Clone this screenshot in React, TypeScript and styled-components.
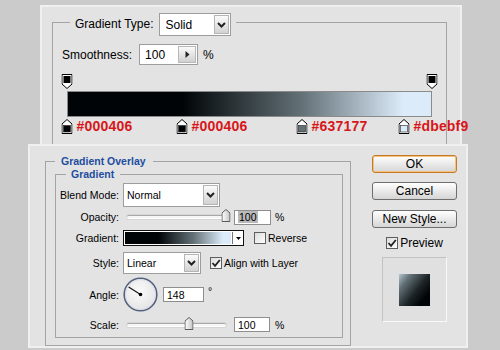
import React from 'react'
import styled, { createGlobalStyle, css } from 'styled-components'

const GlobalStyle = createGlobalStyle`
  html, body {
    margin: 0;
    padding: 0;
    background: #cbcbcb;
  }
  body {
    font-family: "Liberation Sans", Arial, sans-serif;
    color: #000;
    overflow: hidden;
  }
`

const Page = styled.div`
  width: 500px;
  height: 350px;
  padding-top: 5px;
  box-sizing: border-box;
`

// ---- gradient editor (back window) ----
const EditorPanel = styled.div`
  width: 422px;
  height: 139px;
  margin-left: 40px;
  box-sizing: border-box;
  background: #e3e3e3;
  border: 2px solid #f0f0f0;
  border-bottom: none;
  padding: 6px 0 0 10px;
`

const GroupBox = styled.fieldset`
  margin: 0;
  min-inline-size: 0;
  box-sizing: border-box;
  border: 1px solid #a4a4a4;
`

const TypeBox = styled(GroupBox)`
  width: 395px;
  height: 131px;
  border-bottom: none;
  padding: 0 0 0 9px;
`

const TypeLegend = styled.legend`
  margin-left: 8px;
  padding: 0 5px;
  height: 18px;
`

const LegendRow = styled.div`
  display: flex;
  align-items: flex-start;
  gap: 5px;
  height: 18px;
  font-size: 12px;
`

const TypeLabel = styled.span`
  line-height: 23px;
`

const SelectBox = styled.div<{ $w: number; $h: number; $size: number; $pad: number }>`
  display: flex;
  flex-shrink: 0;
  width: ${(p) => p.$w}px;
  height: ${(p) => p.$h}px;
  box-sizing: border-box;
  background: #fff;
  border: 1px solid #9d9d9d;
  font-size: ${(p) => p.$size}px;
  span:first-child {
    flex: 1;
    display: flex;
    align-items: center;
    padding-left: ${(p) => p.$pad}px;
  }
`

const SelectButton = styled.span`
  width: 15px;
  margin: 1px;
  box-sizing: border-box;
  background: linear-gradient(#fbfbfb, #d2d2d2);
  border: 1px solid #b5b5b5;
  display: flex;
  align-items: center;
  justify-content: center;
`

const SmoothRow = styled.div`
  display: flex;
  align-items: center;
  height: 21px;
  margin-top: 13px;
  font-size: 12px;
`

const SmoothLabel = styled.span`
  margin-right: 7px;
`

const SpinInput = styled.div`
  display: flex;
  width: 59px;
  height: 21px;
  box-sizing: border-box;
  background: #fff;
  border: 1px solid #9d9d9d;
  span:first-child {
    flex: 1;
    display: flex;
    align-items: center;
    padding-left: 5px;
  }
`

const SpinButton = styled.span`
  width: 18px;
  margin: 1px;
  box-sizing: border-box;
  background: linear-gradient(#fafafa, #d0d0d0);
  border: 1px solid #b8b8b8;
  display: flex;
  align-items: center;
  justify-content: center;
`

const Unit = styled.span<{ $gap: number }>`
  margin-left: ${(p) => p.$gap}px;
`

const StopTrack = styled.div<{ $top: number }>`
  position: relative;
  width: 365px;
  height: 15px;
  margin: ${(p) => p.$top}px 0 0 5px;
`

const Stop = styled.div`
  position: absolute;
  top: 0;
  display: flex;
  align-items: center;
  gap: 4px;
  transform: translateX(-5.5px);
`

const StopLabel = styled.span`
  font-size: 14px;
  font-weight: bold;
  line-height: 15px;
  letter-spacing: 0.2px;
  color: #d8161a;
  white-space: nowrap;
`

const GradientBar = styled.div<{ $stops: string }>`
  width: 365px;
  height: 26px;
  margin: 2px 0 0 5px;
  box-sizing: border-box;
  border: 1px solid #8a8a8a;
  background: linear-gradient(to right, ${(p) => p.$stops});
`

// ---- layer style dialog (front window) ----
const StyleDialog = styled.div`
  display: flex;
  align-items: flex-start;
  width: 440px;
  margin-left: 28px;
  box-sizing: border-box;
  background: #e3e3e3;
  border: 2px solid #f0f0f0;
  padding: 9px 0 0 15px;
  font-size: 10.5px;
`

const OverlayBox = styled(GroupBox)`
  width: 306px;
  padding: 0 0 7px 9px;
`

const BoxTitle = styled.legend<{ $ml: number; $pl: number; $pr: number }>`
  margin-left: ${(p) => p.$ml}px;
  padding: 0 ${(p) => p.$pr}px 0 ${(p) => p.$pl}px;
  font-weight: bold;
  font-size: 10.5px;
  line-height: 13px;
  color: #1d4d9f;
`

const GradientBox = styled(GroupBox)`
  width: 288px;
  padding: 2px 0 0 0;
`

const Row = styled.div<{ $h: number }>`
  display: flex;
  align-items: center;
  height: ${(p) => p.$h}px;
`

const FieldLabel = styled.span`
  width: 63px;
  margin-right: 4px;
  text-align: right;
  flex-shrink: 0;
`

const Slider = styled.div`
  display: flex;
  align-items: center;
  width: 105px;
  height: 100%;
  padding: 0 2px 0 4px;
  box-sizing: border-box;
`

const SliderTrack = styled.div`
  position: relative;
  flex: 1;
  height: 2px;
  border-radius: 2px;
  background: #f6f6f6;
  border-top: 1px solid #a9a9a9;
  border-bottom: 1px solid #ffffff;
  box-shadow: 0 0 0 1px #d6d6d6;
`

const SliderThumb = styled.svg`
  position: absolute;
  top: -7px;
  transform: translateX(-50%);
`

const NumberInput = styled.div<{ $w: number; $ml: number }>`
  display: flex;
  align-items: center;
  width: ${(p) => p.$w}px;
  height: 15px;
  margin-left: ${(p) => p.$ml}px;
  padding-left: 3px;
  box-sizing: border-box;
  background: #fff;
  border: 1px solid #8e8e8e;
`

const Selected = styled.span`
  background: #b9b9b9;
  padding: 0 1px;
`

const Swatch = styled.div<{ $stops: string }>`
  display: flex;
  width: 121px;
  height: 16px;
  box-sizing: border-box;
  border: 1px solid #111;
  background: #fff;
  padding: 1px 0 1px 1px;
  & > span:first-child {
    flex: 1;
    background: linear-gradient(to right, ${(p) => p.$stops});
  }
`

const SwatchArrow = styled.span`
  width: 10px;
  margin-left: 1px;
  border-left: 1px solid #777;
  display: flex;
  align-items: center;
  justify-content: center;
`

const CheckBox = styled.span<{ $ml: number }>`
  display: flex;
  align-items: center;
  justify-content: center;
  width: 12px;
  height: 12px;
  margin-left: ${(p) => p.$ml}px;
  box-sizing: border-box;
  border: 1px solid #5e5e5e;
  background: linear-gradient(135deg, #dcdcdc, #ffffff);
  flex-shrink: 0;
`

const CheckText = styled.span`
  margin-left: 2px;
  white-space: nowrap;
`

const Degree = styled.span`
  margin-left: 4px;
  align-self: flex-start;
  margin-top: 8px;
`

const Actions = styled.div`
  display: flex;
  flex-direction: column;
  align-items: center;
  width: 85px;
  margin-left: 21px;
`

const DialogButton = styled.div<{ $mt: number; $primary?: boolean }>`
  width: 85px;
  height: 18px;
  margin-top: ${(p) => p.$mt}px;
  box-sizing: border-box;
  display: flex;
  align-items: center;
  justify-content: center;
  font-size: 12px;
  border-radius: 3px;
  border: 1px solid #6e6e6e;
  background: linear-gradient(#ffffff, #ececec 45%, #d5d5d5);
  ${(p) =>
    p.$primary &&
    css`
      border-color: #c47a22;
      box-shadow: inset 0 0 0 1px #f4c27e;
    `}
`

const PreviewRow = styled.div`
  display: flex;
  align-items: center;
  height: 11px;
  margin-top: 9px;
  font-size: 12px;
`

const PreviewBox = styled.div`
  width: 65px;
  height: 65px;
  margin-top: 9px;
  box-sizing: border-box;
  display: flex;
  align-items: center;
  justify-content: center;
  background: #e0e0e0;
  border: 1px solid #f8f8f8;
  border-top-color: #c2c2c2;
  border-left-color: #c2c2c2;
`

const PreviewSquare = styled.div`
  width: 31px;
  height: 32px;
  background: linear-gradient(128deg, #b4c4cf 0%, #637177 22%, #1d2427 55%, #000406 80%);
`

const colorStops = [
  { pos: 0, color: '#000406' },
  { pos: 31.5, color: '#000406' },
  { pos: 64.4, color: '#637177' },
  { pos: 92.3, color: '#dbebf9' },
]

const gradientCss = [
  ...colorStops.map((s) => `${s.color} ${s.pos}%`),
  '#dbebf9 100%',
].join(', ')

const Chevron = () => (
  <svg width="9" height="6" viewBox="0 0 9 6">
    <path d="M1 1 L4.5 4.5 L8 1" stroke="#222" strokeWidth="2" fill="none" />
  </svg>
)

const Tick = () => (
  <svg width="10" height="10" viewBox="0 0 10 10">
    <path d="M1.5 5 L4 7.8 L8.8 2" stroke="#222" strokeWidth="1.8" fill="none" />
  </svg>
)

const OpacityStopIcon = () => (
  <svg width="11" height="15" viewBox="0 0 11 15">
    <path d="M0.5 0.5 H10.5 V10 L5.5 14.5 L0.5 10 Z" fill="#fff" stroke="#000" />
    <rect x="2" y="2" width="7" height="7" fill="#000" />
  </svg>
)

const ColorStopIcon = ({ color }: { color: string }) => (
  <svg width="11" height="15" viewBox="0 0 11 15">
    <path d="M5.5 0.5 L10.5 5 V14.5 H0.5 V5 Z" fill="#fff" stroke="#000" />
    <rect x="2" y="6.5" width="7" height="6.5" fill={color} stroke="#222" strokeWidth="0.6" />
  </svg>
)

const Select = ({ w, h, size, pad, value }: { w: number; h: number; size: number; pad: number; value: string }) => (
  <SelectBox $w={w} $h={h} $size={size} $pad={pad}>
    <span>{value}</span>
    <SelectButton>
      <Chevron />
    </SelectButton>
  </SelectBox>
)

const Range = ({ pct }: { pct: number }) => (
  <Slider>
    <SliderTrack>
      <SliderThumb width="9" height="13" viewBox="0 0 9 13" style={{ left: `${pct}%` }}>
        <defs>
          <linearGradient id="thumbFill" x1="0" y1="0" x2="1" y2="0">
            <stop offset="0" stopColor="#ffffff" />
            <stop offset="1" stopColor="#c4c4c4" />
          </linearGradient>
        </defs>
        <path d="M4.5 0.5 L8.5 4 V12.5 H0.5 V4 Z" fill="url(#thumbFill)" stroke="#5a5a5a" />
      </SliderThumb>
    </SliderTrack>
  </Slider>
)

const AngleDial = ({ angle }: { angle: number }) => {
  const r = (angle * Math.PI) / 180
  const x = 17.5 + 14 * Math.cos(r)
  const y = 17.5 - 14 * Math.sin(r)
  return (
    <svg width="35" height="35" viewBox="0 0 35 35">
      <defs>
        <radialGradient id="dialFill" cx="0.45" cy="0.4" r="0.6">
          <stop offset="0" stopColor="#fbfbfb" />
          <stop offset="1" stopColor="#e4e4e4" />
        </radialGradient>
      </defs>
      <circle cx="17.5" cy="17.5" r="16.3" fill="url(#dialFill)" stroke="#55617f" strokeWidth="1.6" />
      <circle cx="17.5" cy="17.5" r="15" fill="none" stroke="#d6dbe6" strokeWidth="0.8" />
      <line x1="17.5" y1="17.5" x2={x} y2={y} stroke="#111" strokeWidth="1.1" />
      <circle cx="17.5" cy="17.5" r="1.8" fill="#000" />
    </svg>
  )
}

export default function App() {
  return (
    <Page>
      <GlobalStyle />
      <EditorPanel>
        <TypeBox>
          <TypeLegend>
            <LegendRow>
              <TypeLabel>Gradient Type:</TypeLabel>
              <Select w={72} h={23} size={12} pad={6} value="Solid" />
            </LegendRow>
          </TypeLegend>
          <SmoothRow>
            <SmoothLabel>Smoothness:</SmoothLabel>
            <SpinInput>
              <span>100</span>
              <SpinButton>
                <svg width="5" height="7" viewBox="0 0 5 7">
                  <path d="M0.5 0 L4.5 3.5 L0.5 7 Z" fill="#222" />
                </svg>
              </SpinButton>
            </SpinInput>
            <Unit $gap={5}>%</Unit>
          </SmoothRow>
          <StopTrack $top={9}>
            {[0, 100].map((pos) => (
              <Stop key={pos} style={{ left: `${pos}%` }}>
                <OpacityStopIcon />
              </Stop>
            ))}
          </StopTrack>
          <GradientBar $stops={gradientCss} />
          <StopTrack $top={2}>
            {colorStops.map((s) => (
              <Stop key={s.pos} style={{ left: `${s.pos}%` }}>
                <ColorStopIcon color={s.color} />
                <StopLabel>{s.color}</StopLabel>
              </Stop>
            ))}
          </StopTrack>
        </TypeBox>
      </EditorPanel>

      <StyleDialog>
        <OverlayBox>
          <BoxTitle $ml={0} $pl={6} $pr={7}>Gradient Overlay</BoxTitle>
          <GradientBox>
            <BoxTitle $ml={10} $pl={5} $pr={6}>Gradient</BoxTitle>
            <Row $h={24}>
              <FieldLabel>Blend Mode:</FieldLabel>
              <Select w={97} h={24} size={10.5} pad={3} value="Normal" />
            </Row>
            <Row $h={20}>
              <FieldLabel>Opacity:</FieldLabel>
              <Range pct={100} />
              <NumberInput $w={37} $ml={6}>
                <Selected>100</Selected>
              </NumberInput>
              <Unit $gap={4}>%</Unit>
            </Row>
            <Row $h={22}>
              <FieldLabel>Gradient:</FieldLabel>
              <Swatch $stops={gradientCss}>
                <span />
                <SwatchArrow>
                  <svg width="5" height="3" viewBox="0 0 5 3">
                    <path d="M0 0 H5 L2.5 3 Z" fill="#000" />
                  </svg>
                </SwatchArrow>
              </Swatch>
              <CheckBox $ml={10} />
              <CheckText>Reverse</CheckText>
            </Row>
            <Row $h={28}>
              <FieldLabel>Style:</FieldLabel>
              <Select w={78} h={22} size={10.5} pad={3} value="Linear" />
              <CheckBox $ml={9}>
                <Tick />
              </CheckBox>
              <CheckText>Align with Layer</CheckText>
            </Row>
            <Row $h={35}>
              <FieldLabel>Angle:</FieldLabel>
              <AngleDial angle={148} />
              <NumberInput $w={41} $ml={5}>148</NumberInput>
              <Degree>°</Degree>
            </Row>
            <Row $h={25}>
              <FieldLabel>Scale:</FieldLabel>
              <Range pct={63} />
              <NumberInput $w={36} $ml={6}>100</NumberInput>
              <Unit $gap={5}>%</Unit>
            </Row>
          </GradientBox>
        </OverlayBox>

        <Actions>
          <DialogButton $mt={0} $primary>OK</DialogButton>
          <DialogButton $mt={9}>Cancel</DialogButton>
          <DialogButton $mt={10}>New Style...</DialogButton>
          <PreviewRow>
            <CheckBox $ml={0}>
              <Tick />
            </CheckBox>
            <CheckText>Preview</CheckText>
          </PreviewRow>
          <PreviewBox>
            <PreviewSquare />
          </PreviewBox>
        </Actions>
      </StyleDialog>
    </Page>
  )
}
